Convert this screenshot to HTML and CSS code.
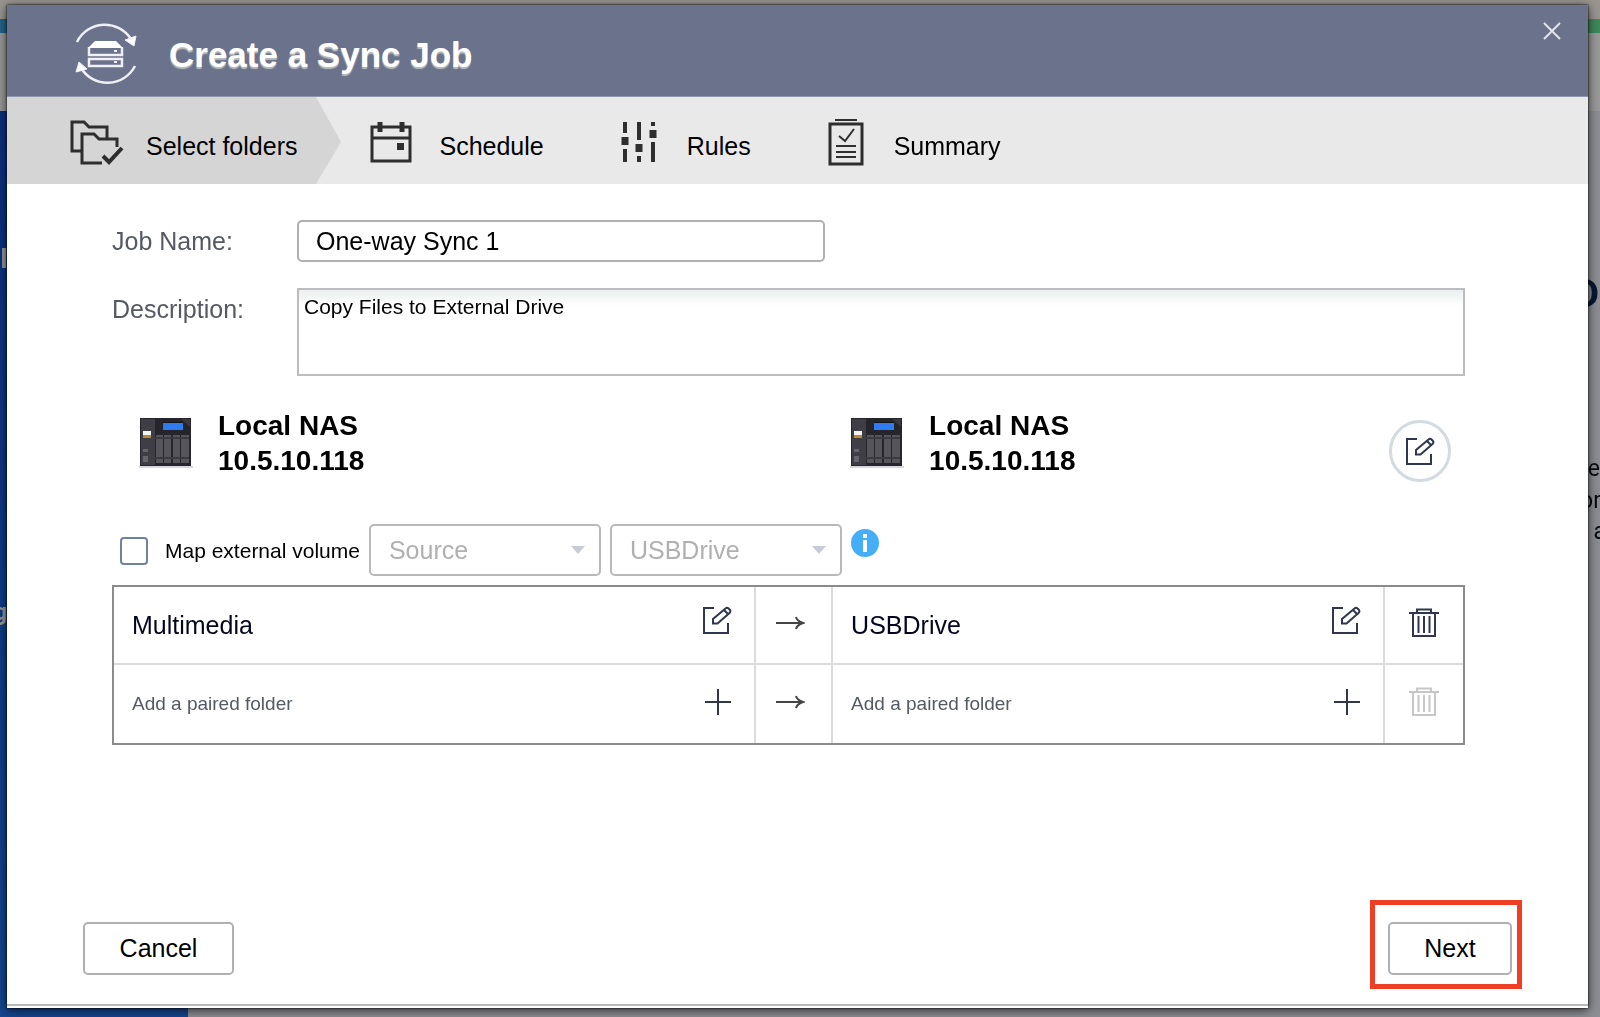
FILE: index.html
```html
<!DOCTYPE html>
<html lang="en">
<head>
    <meta charset="UTF-8">
    <meta name="viewport" content="width=device-width, initial-scale=1.0">
    <title>Create a Sync Job</title>
    <link rel="stylesheet" href="styles.css">
</head>
<body>

    <!-- Shared icons -->
    <svg class="icon-defs" aria-hidden="true">
        <symbol id="icon-edit" viewBox="0 0 30 30">
            <path d="M12 3H2V28H26V18" />
            <path d="M11 18.500V14L23.500 3.500Q25 2 26.500 3.500L28 5Q29 6.500 27.500 8L15.500 18.500ZM22 5L26 9" />
        </symbol>
        <symbol id="icon-plus" viewBox="0 0 30 30">
            <path d="M15 2V28M2 15H28" />
        </symbol>
        <symbol id="icon-arrow" viewBox="0 0 30 16">
            <path d="M1 8H28M21 2Q22 6 28 8Q22 10 21 14" />
        </symbol>
        <symbol id="icon-trash" viewBox="0 0 30 30">
            <path d="M0 5H30M8 5V1.500H22V5M4 5V28H26V5M9.500 8V25M15 8V25M20.500 8V25" />
        </symbol>
        <symbol id="icon-nas" viewBox="0 0 54 52">
            <rect x="0" y="49" width="54" height="2" fill="#d8d8dc" />
            <rect x="1" y="1" width="51" height="48" fill="#26252b" />
            <rect x="2" y="2" width="14" height="46" fill="#3f3e44" />
            <path d="M42 2H51V10Z" fill="#3a3940" />
            <rect x="24" y="5" width="20" height="8" fill="#15151a" />
            <rect x="24" y="6" width="20" height="7" fill="#2f7bf0" />
            <rect x="4" y="14" width="8" height="4" fill="#f3f3f3" />
            <rect x="4" y="18" width="8" height="3" fill="#b48a3c" />
            <path d="M4 32H9V35H4ZM4 39H9V45H4Z" fill="#66656b" />
            <path d="M17 18H24V46H17ZM25 18H32V46H25ZM34 18H41V46H34ZM42 18H50V46H42Z" fill="#56555b" />
            <path d="M16 20H50V22H16ZM16 40H50V42H16Z" fill="#3b3a40" />
        </symbol>
    </svg>

    <!-- Page behind the dialog -->
    <div class="backdrop" aria-hidden="true">
        <div class="backdrop-top"></div>
        <div class="backdrop-stripe"></div>
        <div class="backdrop-bar"></div>
        <div class="backdrop-main">
            <div class="backdrop-side"></div>
        </div>
        <span class="side-letter side-title">I</span>
        <span class="side-letter side-item">g</span>
        <span class="page-letter page-title">D</span>
        <span class="page-letter page-line1">e</span>
        <span class="page-letter page-line2">or</span>
        <span class="page-letter page-line3">a</span>
    </div>

    <main class="dialog">
        <header class="dialog-header">
            <svg class="logo" viewBox="0 0 64 64" fill="none" stroke="#eef0f5" stroke-width="2.500">
                <path d="M3 20A31 31 0 0 1 57 17M61 44A31 31 0 0 1 7 46" />
                <path d="M51 18L62 14L60 24ZM2 50L5 40L13 47Z" fill="#fff" stroke-width="1" />
                <path d="M15 25V33H48V25M15 37H48V44H15Z" />
                <path d="M14 26L21 19H42L49 26Z" fill="#fff" stroke="none" />
                <path d="M40 29H43M40 40H43" stroke-width="2" />
            </svg>
            <h1>Create a Sync Job</h1>
            <button class="close-btn" type="button" aria-label="Close">
                <svg viewBox="0 0 18 18"><path d="M1 1L17 17M17 1L1 17" /></svg>
            </button>
        </header>

        <ol class="steps">
            <li class="step active">
                <svg class="step-folders" viewBox="0 0 54 46" fill="none" stroke="#2e2e2e" stroke-width="3">
                    <path d="M11 32H2V3H14L19 8H37V20M32 44H12V15H24L29 20H47V28" />
                    <path d="M33 37L39 43L52 29" stroke-width="4" />
                </svg>
                <span>Select folders</span>
            </li>
            <li class="step">
                <svg class="step-calendar" viewBox="0 0 42 42" fill="none" stroke="#2e2e2e" stroke-width="3">
                    <path d="M2 6H40V40H2ZM2 17H40" />
                    <path d="M10 1V11M32 1V11" stroke-width="5" />
                    <rect x="27" y="22" width="7" height="7" fill="#2e2e2e" stroke="none" />
                </svg>
                <span>Schedule</span>
            </li>
            <li class="step">
                <svg class="step-rules" viewBox="0 0 36 42" fill="none" stroke="#2e2e2e" stroke-width="4">
                    <path d="M4 1V12M4 28V41M18 1V19M18 35V41M32 1V5M32 21V41" />
                    <path d="M4 16V24M18 23V31M32 9V17" stroke-width="7" />
                </svg>
                <span>Rules</span>
            </li>
            <li class="step">
                <svg class="step-summary" viewBox="0 0 36 48" fill="none" stroke="#2e2e2e" stroke-width="3">
                    <path d="M2 6H34V46H2Z" />
                    <path d="M7 2H29M8 28H28M8 34H28M8 39H28" stroke-width="2" />
                    <path d="M11 18L17 23L26 11" stroke-width="2" />
                </svg>
                <span>Summary</span>
            </li>
        </ol>

        <form class="job-form">
            <div class="field">
                <label for="jobName">Job Name:</label>
                <input class="job-name" id="jobName" type="text" value="One-way Sync 1">
            </div>
            <div class="field field-desc">
                <label for="description">Description:</label>
                <textarea class="job-desc" id="description">Copy Files to External Drive</textarea>
            </div>

            <!-- Source and destination devices -->
            <div class="devices">
                <div class="device">
                    <svg><use href="#icon-nas" /></svg>
                    <div>Local NAS<br>10.5.10.118</div>
                </div>
                <div class="device">
                    <svg><use href="#icon-nas" /></svg>
                    <div>Local NAS<br>10.5.10.118</div>
                </div>
                <button class="device-edit" type="button" aria-label="Change device">
                    <svg class="icon"><use href="#icon-edit" /></svg>
                </button>
            </div>

            <div class="map-row">
                <input id="mapVolume" type="checkbox">
                <label for="mapVolume">Map external volume</label>
                <div class="select-box">
                    <select aria-label="Source or destination" disabled>
                        <option>Source</option>
                    </select>
                </div>
                <div class="select-box">
                    <select aria-label="External volume" disabled>
                        <option>USBDrive</option>
                    </select>
                </div>
                <svg class="info" viewBox="0 0 28 28">
                    <circle cx="14" cy="14" r="14" fill="#45aef9" />
                    <path d="M14 5V9M14 11V23" stroke="#fff" stroke-width="4" />
                </svg>
            </div>

            <!-- Paired folders -->
            <table class="pairs">
                <colgroup>
                    <col class="col-source">
                    <col class="col-arrow">
                    <col class="col-target">
                    <col class="col-delete">
                </colgroup>
                <tr>
                    <td>
                        <div class="folder">
                            <span>Multimedia</span>
                            <button class="icon-btn" type="button" aria-label="Edit source folder"><svg class="icon"><use href="#icon-edit" /></svg></button>
                        </div>
                    </td>
                    <td class="center"><svg class="icon arrow"><use href="#icon-arrow" /></svg></td>
                    <td>
                        <div class="folder">
                            <span>USBDrive</span>
                            <button class="icon-btn" type="button" aria-label="Edit destination folder"><svg class="icon"><use href="#icon-edit" /></svg></button>
                        </div>
                    </td>
                    <td class="center"><button class="icon-btn" type="button" aria-label="Delete pair"><svg class="icon"><use href="#icon-trash" /></svg></button></td>
                </tr>
                <tr class="add-row">
                    <td>
                        <div class="folder">
                            <span>Add a paired folder</span>
                            <button class="icon-btn" type="button" aria-label="Add source folder"><svg class="icon"><use href="#icon-plus" /></svg></button>
                        </div>
                    </td>
                    <td class="center"><svg class="icon arrow"><use href="#icon-arrow" /></svg></td>
                    <td>
                        <div class="folder">
                            <span>Add a paired folder</span>
                            <button class="icon-btn" type="button" aria-label="Add destination folder"><svg class="icon"><use href="#icon-plus" /></svg></button>
                        </div>
                    </td>
                    <td class="center"><button class="icon-btn" type="button" aria-label="Delete pair" disabled><svg class="icon"><use href="#icon-trash" /></svg></button></td>
                </tr>
            </table>
        </form>

        <footer class="dialog-footer">
            <button class="btn" type="button">Cancel</button>
            <div class="highlight">
                <button class="btn btn-next" type="button">Next</button>
            </div>
        </footer>
    </main>

</body>
</html>
```

FILE: styles.css
```css
/* General Styles */
* {
    box-sizing: border-box;
}

body {
    margin: 0;
    display: flex;
    min-height: 100vh;
    padding: 5px 12px 9px 7px;
    font-family: "Liberation Sans", Arial, sans-serif;
    font-size: 25px;
    color: #000;
    overflow: hidden;
}

button, input, textarea, select {
    font-family: inherit;
    font-size: inherit;
    color: inherit;
}

.icon-defs {
    position: absolute;
    width: 0;
    height: 0;
}

/* Page behind the dialog */
.backdrop {
    position: fixed;
    inset: 0;
    display: flex;
    flex-direction: column;
    background: #8d8e93;
}

.backdrop-top {
    height: 19px;
    background: #999590;
}

.backdrop-stripe {
    height: 14px;
    background: linear-gradient(90deg, #24648c 50%, #3f8a5a 50%);
}

.backdrop-bar {
    height: 78px;
    background: #999;
}

.backdrop-main {
    flex: 1;
    display: flex;
}

.backdrop-side {
    width: 188px;
    background: linear-gradient(#0a2f7c, #15468f);
}

.side-letter, .page-letter {
    position: absolute;
    font-family: Roboto, sans-serif;
    font-size: 23px;
    line-height: 30px;
}

.side-letter {
    left: -6px;
    font-weight: bold;
    color: #999;
}

.side-title {
    left: 0;
    top: 244px;
    font-size: 28px;
}

.side-item {
    top: 598px;
}

.page-letter {
    color: #0b0c12;
}

.page-title {
    top: 279px;
    right: 1px;
    font-size: 39px;
    font-weight: bold;
    color: #0a1734;
}

.page-line1 {
    top: 454px;
    right: 0;
}

.page-line2 {
    top: 486px;
    right: -1px;
}

.page-line3 {
    top: 517px;
    right: -6px;
}

/* Dialog */
.dialog {
    position: relative;
    flex: 1;
    display: flex;
    flex-direction: column;
    padding-bottom: 2px;
    background: #fff;
    box-shadow: 0 0 2px #000, 0 2px 10px rgba(0, 0, 0, 0.7);
}

.dialog-header {
    display: flex;
    align-items: center;
    height: 92px;
    padding: 6px 23px 0 67px;
    background: #6b728c;
    border-bottom: 1px solid #9095ab;
}

.logo {
    width: 64px;
    height: 64px;
}

h1 {
    flex: 1;
    margin: 0 0 0 31px;
    padding-top: 2px;
    font-size: 35px;
    line-height: 42px;
    color: #fff;
    text-shadow: 0 2px 1px #b9bdbb;
}

.close-btn {
    align-self: flex-start;
    display: flex;
    margin-top: 7px;
    padding: 4px;
    border: none;
    background: none;
}

.close-btn svg {
    width: 18px;
    height: 18px;
    stroke: #e4e6ee;
    stroke-width: 2;
}

/* Wizard steps */
.steps {
    display: flex;
    height: 87px;
    margin: 0;
    padding: 0;
    list-style: none;
    background: #e9e9e9;
}

.step {
    display: flex;
    align-items: center;
    margin-right: 77px;
    line-height: 30px;
}

.step span {
    padding-top: 10px;
}

.step svg {
    margin: 2px 27px 0 0;
}

.step.active {
    position: relative;
    margin-right: 54px;
    padding: 0 19px 0 63px;
    background: #d5d5d5;
}

.step.active::after {
    content: "";
    position: absolute;
    left: 100%;
    top: 0;
    border-left: 25px solid #d5d5d5;
    border-top: 45px solid transparent;
    border-bottom: 42px solid transparent;
}

.step .step-folders {
    width: 54px;
    height: 46px;
    margin-right: 22px;
}

.step-calendar {
    width: 42px;
    height: 42px;
}

.step-rules {
    width: 36px;
    height: 42px;
}

.step .step-rules, .step .step-summary {
    margin-right: 30px;
}

.step-summary {
    width: 36px;
    height: 48px;
}

/* Form */
.job-form {
    padding: 36px 123px 0 105px;
}

.field {
    display: flex;
    align-items: center;
    margin-bottom: 26px;
    color: #555963;
}

.field label {
    width: 185px;
}

.job-name {
    width: 39%;
    height: 42px;
    padding: 0 17px;
    border: 2px solid #b0b0b0;
    border-radius: 5px;
    color: #000;
}

.field-desc {
    align-items: flex-start;
    margin-bottom: 32px;
}

.field-desc label {
    padding-top: 7px;
}

.job-desc {
    flex: 1;
    height: 88px;
    padding: 5px;
    border: 2px solid #bdbdbd;
    border-radius: 0;
    background: linear-gradient(#ebefef, #fff 16px);
    font-size: 21px;
    line-height: 24px;
    color: #000;
    resize: none;
}

/* Devices */
.devices {
    display: flex;
    align-items: flex-start;
}

.device {
    display: flex;
    align-items: center;
    width: 53%;
    padding-left: 27px;
    font-size: 28px;
    font-weight: bold;
    line-height: 35px;
}

.device + .device {
    width: auto;
    flex: 1;
    padding-left: 21px;
}

.device svg {
    width: 54px;
    height: 52px;
    margin-right: 25px;
}

.device-edit {
    display: flex;
    align-items: center;
    justify-content: center;
    width: 62px;
    height: 62px;
    margin: 12px 14px 0 0;
    padding: 0;
    border: 3px solid #d3dbe0;
    border-radius: 50%;
    background: #fff;
}

/* Icons */
.icon {
    display: block;
    width: 30px;
    height: 30px;
    fill: none;
    stroke: #303650;
    stroke-width: 2;
}

.arrow {
    height: 16px;
    margin: 0 0 0 19px;
    stroke: #444;
}

.icon-btn {
    display: block;
    padding: 0;
    border: none;
    background: none;
}

.icon-btn:disabled .icon {
    stroke: #c6c6c6;
}

/* Map external volume */
.map-row {
    display: flex;
    align-items: center;
    margin: 42px 0 9px;
    font-size: 21px;
}

.map-row input {
    appearance: none;
    width: 28px;
    height: 28px;
    margin: 2px 17px 0 8px;
    border: 2px solid #71839a;
    border-radius: 4px;
    background: #fff;
}

.map-row label {
    margin-right: 9px;
    padding-top: 2px;
}

.select-box {
    position: relative;
    margin-right: 9px;
}

.select-box::after {
    content: "";
    position: absolute;
    right: 16px;
    top: 22px;
    border-top: 8px solid #c9cbd5;
    border-left: 7px solid transparent;
    border-right: 7px solid transparent;
}

.select-box select {
    appearance: none;
    display: block;
    width: 232px;
    height: 52px;
    padding: 0 18px;
    border: 2px solid #b9b9b9;
    border-radius: 5px;
    background: #fff;
    font-size: 25px;
    color: #b0b0b0;
    opacity: 1;
}

.info {
    align-self: flex-start;
    width: 28px;
    height: 28px;
    margin-top: 5px;
}

/* Paired folders */
.pairs {
    width: 100%;
    table-layout: fixed;
    border-collapse: separate;
    border-spacing: 0;
    border: 2px solid #8b8b8b;
}

.col-arrow {
    width: 77px;
}

.col-source {
    width: 47.6%;
}

.col-delete {
    width: 78px;
}

.pairs td {
    height: 78px;
    padding: 0 18px;
    border-right: 2px solid #dcdcdc;
    border-bottom: 2px solid #dcdcdc;
    color: #04061f;
}

.pairs tr:last-child td {
    border-bottom: none;
}

.pairs td:last-child {
    border-right: none;
}

.folder {
    display: flex;
    align-items: center;
    justify-content: space-between;
}

.folder .icon-btn {
    margin: 0 4px 10px 0;
}

.pairs .center {
    padding: 0 0 5px;
}

.center .icon-btn {
    margin: 0 auto;
}

.pairs .add-row span {
    font-size: 19px;
    color: #555963;
}

.add-row .folder .icon-btn {
    margin: 0 3px 4px 0;
}

/* Footer */
.dialog-footer {
    display: flex;
    justify-content: space-between;
    margin-top: auto;
    padding: 0 76px 29px;
    border-bottom: 2px solid #b9b9b9;
}

.btn {
    width: 151px;
    height: 53px;
    padding: 0;
    border: 2px solid #b0b0b0;
    border-radius: 5px;
    background: #fff;
}

.btn-next {
    width: 124px;
}

.highlight {
    position: relative;
}

.highlight::after {
    content: "";
    position: absolute;
    inset: -22px -10px -14px -18px;
    border: 5px solid #ee3e23;
    pointer-events: none;
}
```
